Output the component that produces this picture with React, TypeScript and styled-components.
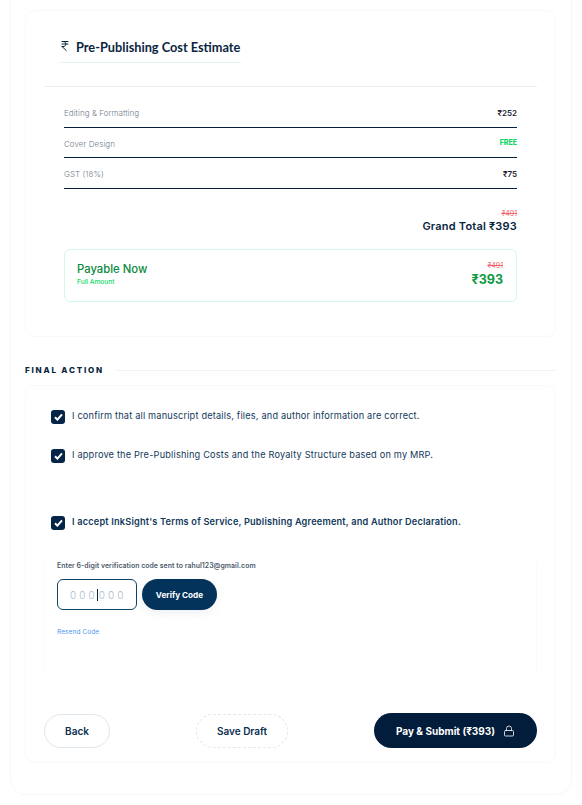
import React from "react";
import styled, { createGlobalStyle } from "styled-components";
import { IndianRupee, Lock } from "lucide-react";

const Global = createGlobalStyle`
  html, body { margin: 0; padding: 0; background: #fff; }
  body { font-family: "Inter", "Liberation Sans", sans-serif; color: #0a2540; }
  * { box-sizing: border-box; }
`;

const Shell = styled.div`
  width: 582px;
  height: 805px;
  padding: 0 10px 10px;
  overflow: hidden;
`;
const Outer = styled.div`
  height: 795px;
  border: 1px solid #f2f9fc;
  border-top: none;
  border-radius: 0 0 16px 16px;
  padding: 10px 15px 0 14px;
  display: flex;
  flex-direction: column;
`;
const Card = styled.section`
  border: 1px solid #f6fafc;
  border-radius: 10px;
  padding: 0 18px;
  height: ${(p: { $h: number }) => p.$h}px;
`;
const TitleRow = styled.div`
  height: 76px;
  border-bottom: 1px solid #e9f0f2;
  padding-top: 24px;
`;
const Title = styled.h2`
  margin: 0 0 0 15px;
  width: 182px;
  height: 28px;
  border-bottom: 1px solid #e7f0f3;
  display: flex;
  align-items: flex-start;
  gap: 5px;
  white-space: nowrap;
  font: 700 12.75px/24px "Lato", sans-serif;
  color: #0a2540;
  svg { margin: 5px 0 0 0; flex: none; }
`;
const Rows = styled.div`
  margin: 10px 20px 0;
`;
const Row = styled.div`
  height: 30.6px;
  border-bottom: 1px solid #041f3d;
  display: flex;
  justify-content: space-between;
  align-items: center;
  padding-top: 3px;
`;
const RowLabel = styled.span`
  font-size: 8px;
  font-weight: 300;
  letter-spacing: 0.05px;
  color: #6f7c8a;
`;
const RowValue = styled.span<{ $free?: boolean }>`
  font-size: ${(p) => (p.$free ? 7 : 8)}px;
  font-weight: ${(p) => (p.$free ? 800 : 600)};
  margin-top: ${(p) => (p.$free ? -3 : 0)}px;
  color: ${(p) => (p.$free ? "#0fd665" : "#1d2733")};
`;
const Totals = styled.div`
  margin: 21px 20px 0;
  text-align: right;
`;
const Strike = styled.div`
  font-size: 7px;
  line-height: 8px;
  color: #f2636b;
  text-decoration: line-through;
`;
const Grand = styled.div`
  font-size: 11px;
  font-weight: 600;
  line-height: 16px;
  letter-spacing: 0.2px;
  color: #0a2540;
`;
const Payable = styled.div`
  margin: 15px 20px 0;
  height: 53px;
  border: 1px solid #d3f8e6;
  border-radius: 6px;
  padding: 0 13px 0 12px;
  display: flex;
  justify-content: space-between;
  align-items: center;
`;
const PayLabel = styled.div`
  font-size: 11.3px;
  font-weight: 500;
  line-height: 14px;
  margin-top: -1px;
  color: #0a8a3c;
`;
const PaySub = styled.div`
  font-size: 6.6px;
  font-weight: 500;
  line-height: 11px;
  margin-top: 1px;
  color: #14d868;
`;
const PayRight = styled.div`
  text-align: right;
`;
const PayAmount = styled.div`
  font-size: 12.5px;
  font-weight: 700;
  line-height: 18px;
  margin-top: 1px;
  color: #0a9a42;
`;
const SectionHead = styled.div`
  height: 48px;
  display: flex;
  align-items: center;
  gap: 12px;
  padding-top: 18px;
`;
const SectionText = styled.span`
  font: 800 8px/12px "Inter", sans-serif;
  letter-spacing: 1.8px;
  color: #0a2540;
  white-space: nowrap;
`;
const SectionLine = styled.span`
  flex: 1;
  height: 1px;
  background: #edf4f6;
`;
const Checks = styled.div`
  margin: 23px 0 0 7px;
`;
const Check = styled.div<{ $gap: number; $bold?: boolean }>`
  display: flex;
  align-items: flex-start;
  gap: 7px;
  height: 14px;
  margin-bottom: ${(p) => p.$gap}px;
  font-size: 9.2px;
  font-weight: ${(p) => (p.$bold ? 600 : 400)};
  letter-spacing: 0.19px;
  line-height: 14px;
  color: #12385a;
  white-space: nowrap;
`;
const Box = styled.span`
  width: 14px;
  height: 14px;
  flex: none;
  margin-top: 1px;
  border-radius: 3px;
  background: #042548;
  display: flex;
  align-items: center;
  justify-content: center;
`;
const Verify = styled.div`
  margin: 32px 0 0;
  height: 114px;
  border: 1px solid #fafbfc;
  border-width: 0 1px;
  padding: 0 12px;
`;
const VerifyLabel = styled.div`
  font-size: 6.9px;
  font-weight: 600;
  line-height: 10px;
  letter-spacing: 0.05px;
  color: #4c5a6c;
`;
const VerifyRow = styled.div`
  display: flex;
  gap: 5px;
  margin-top: 8px;
`;
const CodeBox = styled.div`
  width: 80px;
  height: 31px;
  border: 1px solid #0d4468;
  border-radius: 6px;
  display: flex;
  align-items: center;
  padding-left: 12px;
  font-size: 10px;
  font-weight: 300;
  letter-spacing: 3.05px;
  color: #a9bccd;
`;
const Caret = styled.span`
  width: 1px;
  height: 12px;
  background: #0a2540;
  margin: 0 1px 0 -1px;
`;
const VerifyButton = styled.button`
  width: 75px;
  height: 31px;
  border: none;
  border-radius: 16px;
  background: #03325a;
  color: #fff;
  font: 700 8.2px "Inter", sans-serif;
  box-shadow: 0 3px 8px rgba(3, 50, 90, 0.08);
`;
const Resend = styled.div`
  margin-top: 18px;
  font-size: 6.5px;
  letter-spacing: 0.1px;
  line-height: 9px;
  color: #4b96f0;
`;
const Actions = styled.div`
  margin-top: 38px;
  display: flex;
  justify-content: space-between;
  align-items: center;
`;
const Ghost = styled.button<{ $dashed?: boolean; $w: number }>`
  width: ${(p) => p.$w}px;
  height: 34px;
  background: #fff;
  border: 1px ${(p) => (p.$dashed ? "dashed #e2e8ee" : "solid #dfe7ee")};
  border-radius: 17px;
  color: #0a2f52;
  font: 600 10px "Inter", sans-serif;
`;
const Pay = styled.button`
  width: 163px;
  height: 35px;
  border: none;
  border-radius: 18px;
  background: #021c3b;
  color: #fff;
  font: 700 10px "Inter", sans-serif;
  display: flex;
  align-items: center;
  justify-content: center;
  gap: 8px;
`;

const rows = [
  { label: "Editing & Formatting", value: "₹252" },
  { label: "Cover Design", value: "FREE", free: true },
  { label: "GST (18%)", value: "₹75" },
];

const Tick = () => (
  <svg width="9" height="8" viewBox="0 0 9 8" aria-hidden="true">
    <path d="M1 4.2 3.4 6.6 8 1.3" fill="none" stroke="#fff" strokeWidth="2" />
  </svg>
);

export default function App() {
  return (
    <Shell>
      <Global />
      <Outer>
        <Card $h={327}>
          <TitleRow>
            <Title>
              <IndianRupee size={12} strokeWidth={2} />
              Pre-Publishing Cost Estimate
            </Title>
          </TitleRow>
          <Rows>
            {rows.map((r) => (
              <Row key={r.label}>
                <RowLabel>{r.label}</RowLabel>
                <RowValue $free={r.free}>{r.value}</RowValue>
              </Row>
            ))}
          </Rows>
          <Totals>
            <Strike>₹491</Strike>
            <Grand>Grand Total ₹393</Grand>
          </Totals>
          <Payable>
            <div>
              <PayLabel>Payable Now</PayLabel>
              <PaySub>Full Amount</PaySub>
            </div>
            <PayRight>
              <Strike>₹491</Strike>
              <PayAmount>₹393</PayAmount>
            </PayRight>
          </Payable>
        </Card>
        <SectionHead>
          <SectionText>FINAL ACTION</SectionText>
          <SectionLine />
        </SectionHead>
        <Card $h={378}>
          <Checks>
            <Check $gap={25}>
              <Box><Tick /></Box>
              I confirm that all manuscript details, files, and author information are correct.
            </Check>
            <Check $gap={53}>
              <Box><Tick /></Box>
              I approve the Pre-Publishing Costs and the Royalty Structure based on my MRP.
            </Check>
            <Check $gap={0} $bold>
              <Box><Tick /></Box>
              I accept InkSight's Terms of Service, Publishing Agreement, and Author Declaration.
            </Check>
          </Checks>
          <Verify>
            <VerifyLabel>Enter 6-digit verification code sent to rahul123@gmail.com</VerifyLabel>
            <VerifyRow>
              <CodeBox>
                000<Caret />000
              </CodeBox>
              <VerifyButton>Verify Code</VerifyButton>
            </VerifyRow>
            <Resend>Resend Code</Resend>
          </Verify>
          <Actions>
            <Ghost $w={66}>Back</Ghost>
            <Ghost $w={92} $dashed>Save Draft</Ghost>
            <Pay>
              Pay &amp; Submit (₹393)
              <Lock size={12} strokeWidth={1.6} />
            </Pay>
          </Actions>
        </Card>
      </Outer>
    </Shell>
  );
}
